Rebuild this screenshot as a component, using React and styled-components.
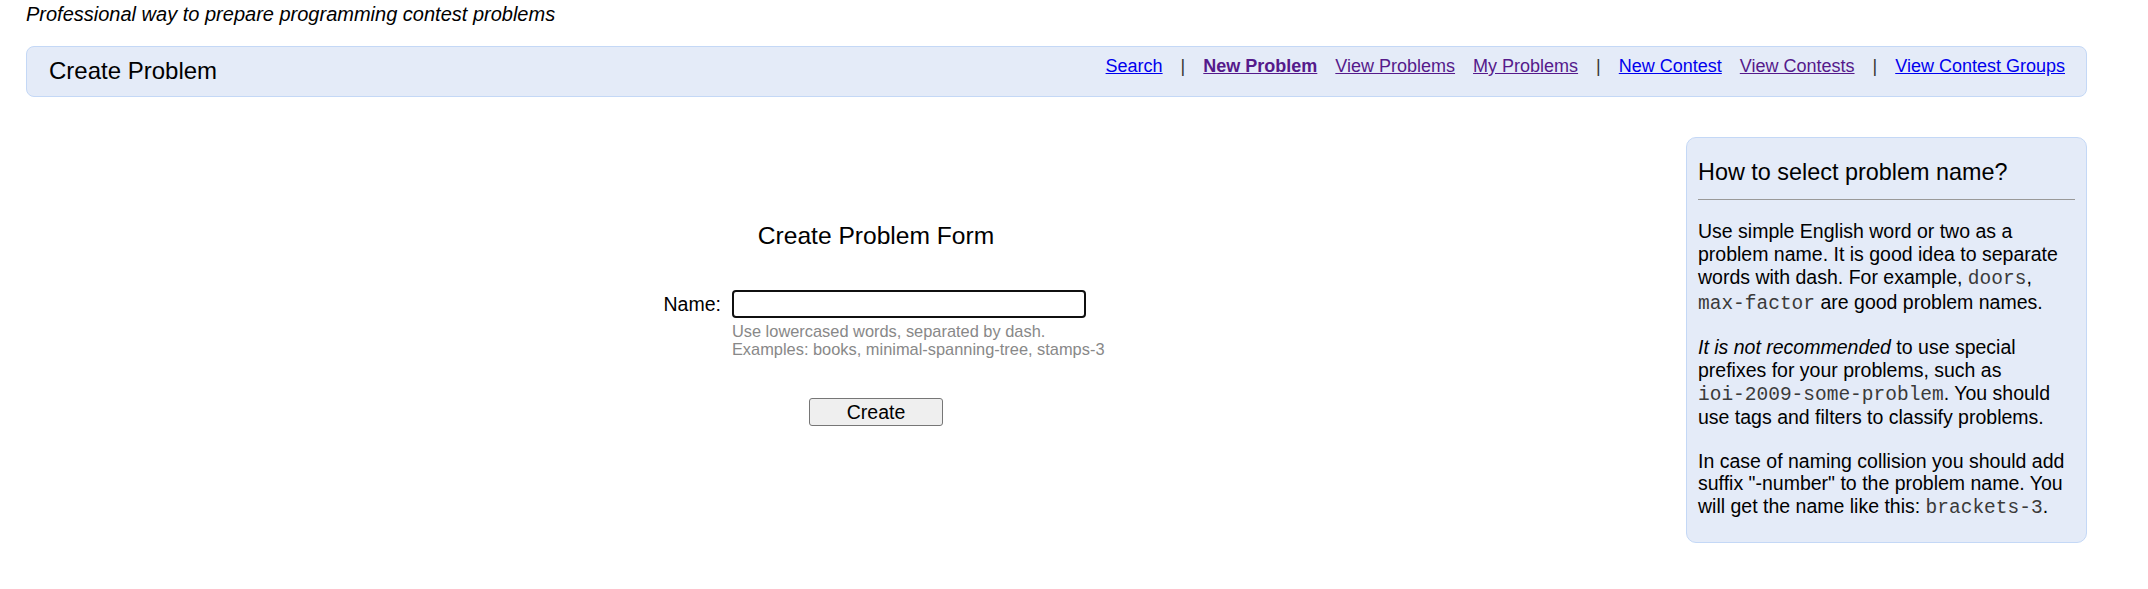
import styled, { createGlobalStyle } from "styled-components";

const GlobalStyle = createGlobalStyle`
  body {
    margin: 0;
    background: #ffffff;
    color: #000000;
    font-family: "Liberation Sans", Arial, sans-serif;
  }
`;

const Page = styled.div`
  padding: 3px 61px 0 26px;
`;

const Tagline = styled.div`
  font-style: italic;
  font-size: 20px;
  line-height: 23px;
`;

const Header = styled.div`
  margin-top: 20px;
  height: 51px;
  box-sizing: border-box;
  display: flex;
  justify-content: space-between;
  align-items: flex-start;
  padding: 10px 21px 0 22px;
  background: #e4ebf8;
  border: 1px solid #c4d8f6;
  border-radius: 8px;
`;

const PageTitle = styled.div`
  font-size: 24px;
`;

const Nav = styled.nav`
  display: flex;
  align-items: baseline;
  gap: 18px;
  font-size: 18px;
  margin-top: -1px;
`;

const NavLink = styled.a`
  color: ${(p) => (p.$visited ? "#551a8b" : "#0000ee")};
  font-weight: ${(p) => (p.$current ? "bold" : "normal")};
  text-decoration: underline;
  cursor: pointer;
`;

const Separator = styled.span`
  color: #333333;
`;

const Content = styled.div`
  display: flex;
  align-items: flex-start;
  margin-top: 40px;
`;

const Main = styled.div`
  flex: 1;
  padding-left: 40px;
  display: flex;
  flex-direction: column;
  align-items: center;
  padding-top: 85px;
`;

const FormTitle = styled.div`
  font-size: 24.6px;
  line-height: 27.6px;
  margin-bottom: 40.5px;
`;

const FormGrid = styled.div`
  display: grid;
  grid-template-columns: auto auto;
  column-gap: 11px;
  row-gap: 5px;
  padding-left: 16px;
  font-size: 19.5px;
`;

const Label = styled.label`
  display: flex;
  align-items: center;
  justify-content: flex-end;
`;

const NameInput = styled.input`
  width: 354px;
  height: 28.3px;
  box-sizing: border-box;
  border: 2px solid #101010;
  border-radius: 4px;
  outline: none;
  padding: 1px 4px;
  font-family: "Liberation Sans", Arial, sans-serif;
  font-size: 19.5px;
`;

const Hint = styled.div`
  grid-column: 2;
  font-size: 16.4px;
  line-height: 17.3px;
  color: #888888;
  white-space: nowrap;
`;

const SubmitButton = styled.button`
  margin-top: 40px;
  width: 134px;
  height: 28.4px;
  box-sizing: border-box;
  background: #efefef;
  border: 1px solid #767676;
  border-radius: 3px;
  font-family: "Liberation Sans", Arial, sans-serif;
  font-size: 19.5px;
  color: #000000;
  padding: 0;
`;

const Panel = styled.div`
  width: 401px;
  box-sizing: border-box;
  background: #e4ebf8;
  border: 1px solid #c4d8f6;
  border-radius: 10px;
  padding: 0 11px 1px;
  font-size: 19.5px;
  line-height: 22.8px;
`;

const PanelTitle = styled.div`
  margin-top: 20.8px;
  font-size: 23.4px;
  line-height: normal;
`;

const Rule = styled.hr`
  margin: 13px 0 0;
  border: 0;
  border-top: 1px solid #999999;
`;

const Para = styled.p`
  margin: 20.5px 0;
`;

const Code = styled.span`
  font-family: "Liberation Mono", "Courier New", monospace;
  font-size: 19.5px;
  color: #3a3a3a;
  white-space: nowrap;
`;

const links = [
  { label: "Search" },
  "sep",
  { label: "New Problem", visited: true, current: true },
  { label: "View Problems", visited: true },
  { label: "My Problems", visited: true },
  "sep",
  { label: "New Contest" },
  { label: "View Contests", visited: true },
  "sep",
  { label: "View Contest Groups" },
];

export default function App() {
  return (
    <>
      <GlobalStyle />
      <Page>
        <Tagline>Professional way to prepare programming contest problems</Tagline>

        <Header>
          <PageTitle>Create Problem</PageTitle>
          <Nav>
            {links.map((item, i) =>
              item === "sep" ? (
                <Separator key={i}>|</Separator>
              ) : (
                <NavLink
                  key={i}
                  $visited={item.visited}
                  $current={item.current}
                >
                  {item.label}
                </NavLink>
              )
            )}
          </Nav>
        </Header>

        <Content>
          <Main>
            <FormTitle>Create Problem Form</FormTitle>
            <FormGrid>
              <Label htmlFor="name">Name:</Label>
              <NameInput id="name" type="text" />
              <Hint>
                Use lowercased words, separated by dash.
                <br />
                Examples: books, minimal-spanning-tree, stamps-3
              </Hint>
            </FormGrid>
            <SubmitButton>Create</SubmitButton>
          </Main>

          <Panel>
            <PanelTitle>How to select problem name?</PanelTitle>
            <Rule />
            <Para>
              Use simple English word or two as a problem name. It is good idea
              to separate words with dash. For example, <Code>doors</Code>,{" "}
              <Code>max-factor</Code> are good problem names.
            </Para>
            <Para>
              <i>It is not recommended</i> to use special prefixes for your
              problems, such as <Code>ioi-2009-some-problem</Code>. You should
              use tags and filters to classify problems.
            </Para>
            <Para>
              In case of naming collision you should add suffix "-number" to
              the problem name. You will get the name like this:{" "}
              <Code>brackets-3</Code>.
            </Para>
          </Panel>
        </Content>
      </Page>
    </>
  );
}
